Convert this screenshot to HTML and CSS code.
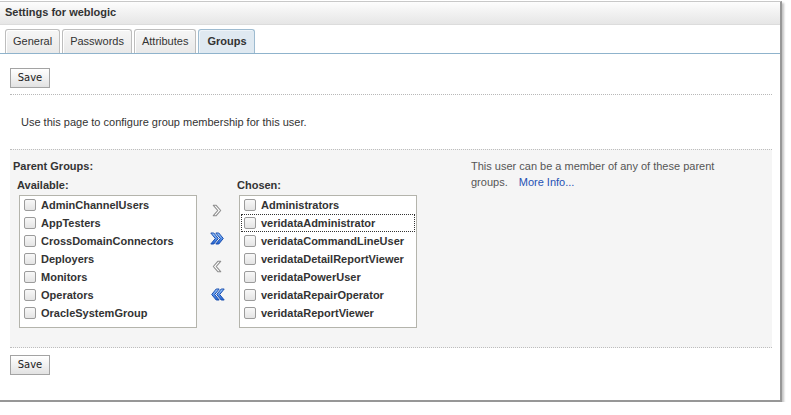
FILE: index.html
```html
<!DOCTYPE html>
<html>
<head>
<meta charset="utf-8">
<link rel="stylesheet" href="styles.css">
</head>
<body>
<div class="frame">
  <div class="header">Settings for weblogic</div>
  <div class="tabs">
    <div class="tab">General</div>
    <div class="tab">Passwords</div>
    <div class="tab">Attributes</div>
    <div class="tab active">Groups</div>
  </div>
  <div class="content">
    <div class="btnrow"><span class="btn">Save</span></div>
    <div class="intro">Use this page to configure group membership for this user.</div>
    <div class="section">
      <div class="groups">
        <div class="title">Parent Groups:</div>
        <div class="shuttle">
          <div class="col">
            <div class="label">Available:</div>
            <div class="list">
              <div class="row"><span class="cb"></span>AdminChannelUsers</div>
              <div class="row"><span class="cb"></span>AppTesters</div>
              <div class="row"><span class="cb"></span>CrossDomainConnectors</div>
              <div class="row"><span class="cb"></span>Deployers</div>
              <div class="row"><span class="cb"></span>Monitors</div>
              <div class="row"><span class="cb"></span>Operators</div>
              <div class="row"><span class="cb"></span>OracleSystemGroup</div>
            </div>
          </div>
          <div class="arrows">
            <svg class="ico" width="10" height="13" viewBox="0 0 10 13"><polygon points="1.3,1.3 4.2,1.3 8.7,6.5 4.2,11.7 1.3,11.7 5.8,6.5" fill="#fdfdfd" stroke="#8e8e8e" stroke-width="1.1" stroke-linejoin="round"/></svg>
            <svg class="ico" width="15" height="13" viewBox="0 0 15 13"><defs><linearGradient id="g1" x1="0" y1="0" x2="0" y2="1"><stop offset="0" stop-color="#9ccaff"/><stop offset="1" stop-color="#1c5fd4"/></linearGradient></defs><polygon points="0.8,1 3.8,1 8.3,6.5 3.8,12 0.8,12 5.3,6.5" fill="url(#g1)" stroke="#1b4fae" stroke-linejoin="round"/><polygon points="5.8,1 8.8,1 13.3,6.5 8.8,12 5.8,12 10.3,6.5" fill="url(#g1)" stroke="#1b4fae" stroke-linejoin="round"/></svg>
            <svg class="ico" width="10" height="13" viewBox="0 0 10 13"><polygon points="8.7,1.3 5.8,1.3 1.3,6.5 5.8,11.7 8.7,11.7 4.2,6.5" fill="#fdfdfd" stroke="#8e8e8e" stroke-width="1.1" stroke-linejoin="round"/></svg>
            <svg class="ico" width="15" height="13" viewBox="0 0 15 13"><defs><linearGradient id="g2" x1="0" y1="0" x2="0" y2="1"><stop offset="0" stop-color="#9ccaff"/><stop offset="1" stop-color="#1c5fd4"/></linearGradient></defs><polygon points="14.2,1 11.2,1 6.7,6.5 11.2,12 14.2,12 9.7,6.5" fill="url(#g2)" stroke="#1b4fae" stroke-linejoin="round"/><polygon points="9.2,1 6.2,1 1.7,6.5 6.2,12 9.2,12 4.7,6.5" fill="url(#g2)" stroke="#1b4fae" stroke-linejoin="round"/></svg>
          </div>
          <div class="col">
            <div class="label">Chosen:</div>
            <div class="list">
              <div class="row"><span class="cb"></span>Administrators</div>
              <div class="row focus"><span class="cb"></span>veridataAdministrator</div>
              <div class="row"><span class="cb"></span>veridataCommandLineUser</div>
              <div class="row"><span class="cb"></span>veridataDetailReportViewer</div>
              <div class="row"><span class="cb"></span>veridataPowerUser</div>
              <div class="row"><span class="cb"></span>veridataRepairOperator</div>
              <div class="row"><span class="cb"></span>veridataReportViewer</div>
            </div>
          </div>
        </div>
      </div>
      <div class="help">
        <div>This user can be a member of any of these parent</div>
        <div>groups. <a class="more" href="#">More Info...</a></div>
      </div>
    </div>
    <div class="btnrow bottom"><span class="btn">Save</span></div>
  </div>
</div>
</body>
</html>
```

FILE: styles.css
```css
html, body {
  margin: 0;
  padding: 0;
  background: #fff;
}
body {
  font-family: "Liberation Sans", Arial, sans-serif;
  font-size: 11px;
  color: #333;
}
.frame {
  margin-top: 1px;
  width: 780px;
  height: 398px;
  border-top: 1px solid #c8c8c8;
  border-right: 2px solid #979797;
  border-bottom: 2px solid #979797;
  box-shadow: 2px 2px 2px #c4c4c4;
  background: #fff;
}
.header {
  height: 22px;
  line-height: 21px;
  padding-left: 5px;
  font-weight: bold;
  color: #333;
  background: linear-gradient(#fdfdfd, #f2f2f2 45%, #e6e6e6);
  border-bottom: 1px solid #dcdcdc;
}
.tabs {
  display: flex;
  gap: 2px;
  margin-top: 4px;
  padding-left: 5px;
  border-bottom: 1px solid #8fb3cc;
  height: 24px;
  align-items: flex-end;
}
.tab {
  height: 23px;
  line-height: 22px;
  padding: 0 7px;
  border: 1px solid #bdbdbd;
  border-bottom: none;
  border-radius: 3px 3px 0 0;
  background: linear-gradient(#f6f6f6, #e9e9e9);
  box-shadow: inset 1px 1px 0 #fff;
  color: #333;
}
.tab.active {
  font-weight: bold;
  background: #dfe9f1;
  border-color: #9ebbd0;
  box-shadow: inset 1px 1px 0 #eef4f9;
  padding: 0 7px 0 8px;
}
.content {
  padding: 0 8px 0 10px;
}
.btnrow {
  padding-top: 14px;
  padding-bottom: 6px;
  border-bottom: 1px dotted #b8b8b8;
}
.btnrow.bottom {
  padding-top: 7px;
  border-bottom: none;
}
.btn {
  display: inline-block;
  box-sizing: border-box;
  width: 40px;
  height: 20px;
  line-height: 18px;
  text-align: center;
  font-family: "DejaVu Sans", Verdana, sans-serif;
  font-size: 10px;
  color: #222;
  border: 1px solid #a3a3a3;
  background: linear-gradient(#ffffff, #f1f1f1 50%, #e2e2e2);
  vertical-align: top;
}
.intro {
  padding: 19px 0 19px 11px;
  line-height: 16px;
  color: #333;
}
.section {
  display: flex;
  background: #f5f5f5;
  border-top: 1px dotted #bdbdbd;
  border-bottom: 1px dotted #bdbdbd;
  padding: 8px 0 19px 3px;
}
.groups {
  width: 404px;
}
.title {
  font-weight: bold;
  line-height: 16px;
}
.shuttle {
  display: flex;
  margin-top: 3px;
  margin-left: 4px;
}
.col {
  display: flex;
  flex-direction: column;
}
.label {
  font-weight: bold;
  line-height: 16px;
}
.list {
  margin-top: 2px;
  margin-left: 2px;
  box-sizing: border-box;
  width: 178px;
  height: 133px;
  background: #fff;
  border: 1px solid #b4b4ac;
}
.row {
  display: flex;
  align-items: center;
  box-sizing: border-box;
  height: 18px;
  margin: 0 1px;
  padding-left: 2px;
  border: 1px solid transparent;
  font-weight: bold;
  color: #333;
  white-space: nowrap;
}
.row.focus {
  border: 1px dotted #333;
}
.cb {
  display: inline-block;
  box-sizing: border-box;
  width: 12px;
  height: 12px;
  margin-right: 5px;
  border: 1px solid #9b9b9b;
  border-radius: 2px;
  background: linear-gradient(#f8f8f8, #e4e4e4);
  flex: none;
}
.arrows {
  width: 40px;
  display: flex;
  flex-direction: column;
  align-items: center;
  padding-top: 27px;
  gap: 15px;
}
.ico {
  display: block;
}
.help {
  margin-left: 54px;
  line-height: 16px;
  color: #555;
}
.more {
  color: #2552b4;
  text-decoration: none;
  margin-left: 8px;
}
```
